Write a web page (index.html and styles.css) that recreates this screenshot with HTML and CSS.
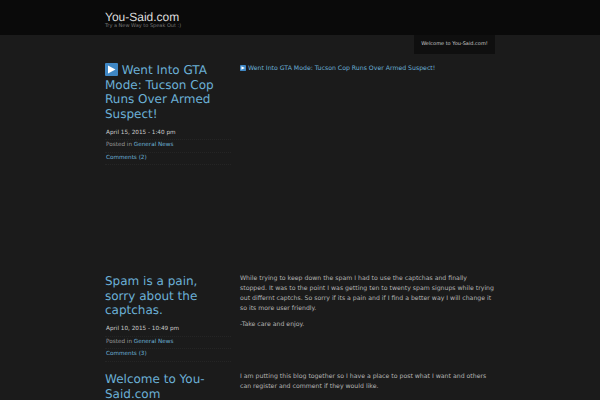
FILE: index.html
```html
<!DOCTYPE html>
<html lang="en">
<head>
  <meta charset="UTF-8" />
  <title>You-Said.com</title>
  <link rel="stylesheet" href="styles.css">
</head>
<body>
  <header class="site-header">
    <div class="wrap">
      <div class="site-title">You-Said.com</div>
      <div class="site-desc">Try a New Way to Speak Out :)</div>
    </div>
  </header>

  <div class="wrap">
    <div class="welcome-row"><div class="welcome">Welcome to You-Said.com!</div></div>

    <!-- posts -->
    <article class="post post-first">
      <div class="post-meta">
        <h2><a href="#"><svg class="play big" viewBox="0 0 13 13"><rect width="13" height="13" rx="1" fill="#3f87c4"/><path d="M3 2.5 10.5 6.5 3 10.5Z" fill="#fff"/></svg> Went Into GTA Mode: Tucson Cop Runs Over Armed Suspect!</a></h2>
        <ul>
          <li>April 15, 2015 - 1:40 pm</li>
          <li class="dim">Posted in <a href="#">General News</a></li>
          <li><a href="#">Comments (2)</a></li>
        </ul>
      </div>
      <div class="post-body">
        <p><a href="#"><svg class="play" viewBox="0 0 13 13"><rect width="13" height="13" rx="1" fill="#3f87c4"/><path d="M3 2.5 10.5 6.5 3 10.5Z" fill="#fff"/></svg> Went Into GTA Mode: Tucson Cop Runs Over Armed Suspect!</a></p>
      </div>
    </article>

    <article class="post post-second">
      <div class="post-meta">
        <h2><a href="#">Spam is a pain, sorry about the captchas.</a></h2>
        <ul>
          <li>April 10, 2015 - 10:49 pm</li>
          <li class="dim">Posted in <a href="#">General News</a></li>
          <li><a href="#">Comments (3)</a></li>
        </ul>
      </div>
      <div class="post-body">
        <p>While trying to keep down the spam I had to use the captchas and finally stopped. It was to the point I was getting ten to twenty spam signups while trying out differnt captchs. So sorry if its a pain and if I find a better way I will change it so its more user friendly.</p>
        <p>-Take care and enjoy.</p>
      </div>
    </article>

    <article class="post">
      <div class="post-meta">
        <h2><a href="#">Welcome to You-Said.com</a></h2>
      </div>
      <div class="post-body">
        <p>I am putting this blog together so I have a place to post what I want and others can register and comment if they would like.</p>
      </div>
    </article>
  </div>
</body>
</html>
```

FILE: styles.css
```css
html,body{height:400px;overflow:hidden}
body{margin:0;background:#1b1b1b;color:#b4b4b4;font-family:"DejaVu Sans",sans-serif;font-size:6.2px;line-height:10px;text-rendering:geometricPrecision}
a{color:#6bb0d6;text-decoration:none}
.wrap{width:390px;margin-left:105px}
.site-header{height:35px;background:#0a0a0a;box-sizing:border-box;padding-top:10px}
.site-title{font-family:"Liberation Sans",sans-serif;font-size:12px;line-height:14px;color:#ddd}
.site-desc{font-size:5px;line-height:5px;color:#777}
.welcome-row{display:flex;justify-content:flex-end;height:28px}
.welcome{width:81px;height:19px;background:#0f0f0f;color:#ccc;font-size:5px;line-height:19px;text-align:center}
.post{display:flex;gap:9px}
.post-first{height:211px}
.post-second{height:98px}
.post-first .post-body{padding-top:1px}
.post-first h2{margin-bottom:7px}
.post-meta{width:126px;flex:none}
.post-meta h2{margin:0 0 6px;font-weight:normal;font-size:12px;line-height:14.7px}
.post-meta ul{list-style:none;margin:0;padding:0}
.post-meta li{padding-left:1px;height:11.5px;line-height:11.5px;font-size:5.7px;color:#ccc;border-bottom:1px dotted #252525}
.post-meta li.dim{color:#999}
.post-body{flex:1}
.post-body p{margin:0 0 6px}
.play{width:13px;height:13px;vertical-align:-2px}
.post-body .play{width:6px;height:6px;vertical-align:-1px}
```
